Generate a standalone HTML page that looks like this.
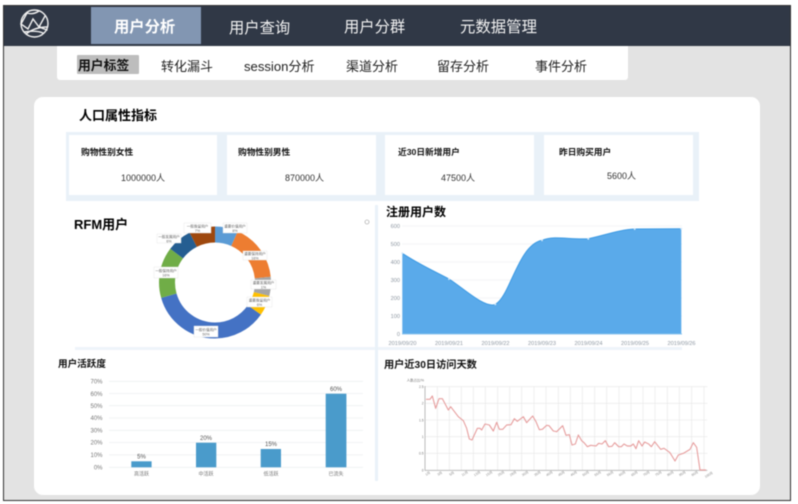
<!DOCTYPE html>
<html lang="zh-CN">
<head>
<meta charset="utf-8">
<title>用户分析</title>
<style>
html,body{margin:0;padding:0;background:#fff;}
body{width:798px;height:504px;overflow:hidden;position:relative;font-family:"Liberation Sans","Noto Sans CJK SC",sans-serif;}
#wrap{position:absolute;left:0;top:0;width:798px;height:504px;filter:blur(.45px);}
#frame{position:absolute;left:3px;top:5px;width:786px;height:494px;background:#e3e3e3;border:1px solid #333;overflow:hidden;}
.abs,.t{position:absolute;}
.t{white-space:nowrap;line-height:1;}
svg{position:absolute;left:0;top:0;}
svg text{font-family:"Liberation Sans","Noto Sans CJK SC",sans-serif;}
</style>
</head>
<body>
<div id="wrap">
<div id="frame"></div>
<div class="abs" style="left:4px;top:6px;width:786px;height:40px;background:#303846;"></div>
<div class="abs" style="left:91px;top:7px;width:110px;height:37px;background:#8296b2;"></div>
<div class="abs" style="left:57px;top:46px;width:571px;height:34px;background:#fff;border-radius:0 0 3px 3px;"></div>
<div class="abs" style="left:77px;top:55px;width:62px;height:19px;background:#bdbdbd;border-radius:1px;"></div>
<div class="abs" style="left:34px;top:97px;width:726px;height:398px;background:#fff;border-radius:9px;"></div>
<div class="abs" style="left:66px;top:132px;width:633px;height:69px;background:#e9f1f8;"></div>
<div class="abs" style="left:69px;top:135px;width:148px;height:60px;background:#fff;"></div>
<div class="abs" style="left:227px;top:135px;width:149px;height:60px;background:#fff;"></div>
<div class="abs" style="left:385px;top:135px;width:149px;height:60px;background:#fff;"></div>
<div class="abs" style="left:544px;top:135px;width:149px;height:60px;background:#fff;"></div>
<div class="abs" style="left:75px;top:347px;width:607px;height:3px;background:#eef4fa;"></div>
<div class="abs" style="left:375px;top:205px;width:3px;height:276px;background:#eaf2f9;"></div>

<span class="t" style="left:114px;top:20px;font-size:15.3px;font-weight:700;color:#fff;">用户分析</span>
<span class="t" style="left:229px;top:21px;font-size:15.3px;color:#f2f2f2;">用户查询</span>
<span class="t" style="left:344px;top:20px;font-size:15.3px;color:#f2f2f2;">用户分群</span>
<span class="t" style="left:460px;top:20px;font-size:15.4px;color:#f2f2f2;">元数据管理</span>

<span class="t" style="left:78px;top:60px;font-size:12.8px;font-weight:700;color:#111;">用户标签</span>
<span class="t" style="left:161px;top:60px;font-size:13px;color:#222;">转化漏斗</span>
<span class="t" style="left:244px;top:60px;font-size:13.1px;color:#222;">session分析</span>
<span class="t" style="left:346px;top:60px;font-size:13px;color:#222;">渠道分析</span>
<span class="t" style="left:437px;top:60px;font-size:13px;color:#222;">留存分析</span>
<span class="t" style="left:535px;top:60px;font-size:13px;color:#222;">事件分析</span>

<span class="t" style="left:79px;top:109px;font-size:13px;font-weight:700;color:#000;">人口属性指标</span>

<span class="t" style="left:81px;top:148px;font-size:8.7px;font-weight:700;color:#111;">购物性别女性</span>
<span class="t" style="left:238px;top:148px;font-size:8.7px;font-weight:700;color:#111;">购物性别男性</span>
<span class="t" style="left:398px;top:148px;font-size:8.7px;font-weight:700;color:#111;">近30日新增用户</span>
<span class="t" style="left:559px;top:148px;font-size:8.7px;font-weight:700;color:#111;">昨日购买用户</span>
<span class="t" style="left:121px;top:174px;font-size:9px;color:#333;">1000000人</span>
<span class="t" style="left:285px;top:174px;font-size:9px;color:#333;">870000人</span>
<span class="t" style="left:441px;top:174px;font-size:9px;color:#333;">47500人</span>
<span class="t" style="left:607px;top:172px;font-size:9px;color:#333;">5600人</span>

<span class="t" style="left:74px;top:218px;font-size:13px;font-weight:700;color:#000;">RFM用户</span>
<span class="t" style="left:386px;top:206px;font-size:12px;font-weight:700;color:#000;">注册用户数</span>
<span class="t" style="left:58px;top:360px;font-size:9.6px;font-weight:700;color:#111;">用户活跃度</span>
<span class="t" style="left:384px;top:361px;font-size:10.2px;font-weight:700;color:#111;">用户近30日访问天数</span>

<svg width="798" height="504" viewBox="0 0 798 504">
  <!-- logo -->
  <g fill="none" stroke="#f0f0f0" stroke-width="1.4" stroke-linecap="round">
    <circle cx="34.500" cy="23.500" r="13.500"/>
    <path d="M27 13 Q33 15 39 11 M27 13 L21 24 L28 29 L33 19 L39 27 L45 16 M26 34 Q35 27 47 27 M24 32 Q36 30 43 33 M39 27 L47 30"/>
  </g>
  <circle cx="39.500" cy="27" r="1.300" fill="#f0f0f0"/>
  <circle cx="367" cy="222" r="2" fill="#fff" stroke="#999" stroke-width=".6"/>

  <!-- donut -->
  <g fill="none" stroke-width="16" transform="rotate(-90 215 282.500)">
    <circle cx="215" cy="282.500" r="48" pathLength="360" stroke="#5b9bd5" stroke-dasharray="24 360" stroke-dashoffset="0"/>
    <circle cx="215" cy="282.500" r="48" pathLength="360" stroke="#ed7d31" stroke-dasharray="60 360" stroke-dashoffset="-24"/>
    <circle cx="215" cy="282.500" r="48" pathLength="360" stroke="#a5a5a5" stroke-dasharray="20 360" stroke-dashoffset="-84"/>
    <circle cx="215" cy="282.500" r="48" pathLength="360" stroke="#ffc000" stroke-dasharray="21 360" stroke-dashoffset="-104"/>
    <circle cx="215" cy="282.500" r="48" pathLength="360" stroke="#4472c4" stroke-dasharray="129 360" stroke-dashoffset="-125"/>
    <circle cx="215" cy="282.500" r="48" pathLength="360" stroke="#70ad47" stroke-dasharray="53 360" stroke-dashoffset="-254"/>
    <circle cx="215" cy="282.500" r="48" pathLength="360" stroke="#255e91" stroke-dasharray="26 360" stroke-dashoffset="-307"/>
    <circle cx="215" cy="282.500" r="48" pathLength="360" stroke="#9e480e" stroke-dasharray="27 360" stroke-dashoffset="-333"/>
  </g>
  <g fill="#fff" stroke="#e4e4e4" stroke-width=".4">
    <rect x="184" y="223" width="27" height="10"/>
    <rect x="157" y="234" width="24" height="9"/>
    <rect x="154" y="267" width="24" height="11"/>
    <rect x="194" y="326" width="24" height="11"/>
    <rect x="223" y="223" width="24" height="10"/>
    <rect x="243" y="251" width="24" height="9"/>
    <rect x="251" y="280" width="25" height="9"/>
    <rect x="247" y="297" width="25" height="10"/>
  </g>
  <g font-size="3.600" fill="#666" text-anchor="middle">
    <text x="197.500" y="227.500">一般挽留用户</text><text x="197.500" y="232">7%</text>
    <text x="169" y="238">一般发展用户</text><text x="169" y="242.500">6%</text>
    <text x="166" y="272">一般保持用户</text><text x="166" y="276.500">16%</text>
    <text x="206" y="331">一般价值用户</text><text x="206" y="335.500">50%</text>
    <text x="235" y="227.500">重要价值用户</text><text x="235" y="232">8%</text>
    <text x="255" y="255">重要保持用户</text><text x="255" y="259.500">16%</text>
    <text x="263.500" y="284">重要发展用户</text><text x="263.500" y="288.500">1%</text>
    <text x="259.500" y="301.500">重要挽留用户</text><text x="259.500" y="306">6%</text>
  </g>

  <!-- area chart -->
  <g stroke="#f0f2f5" stroke-width=".7">
    <path d="M402 226H682M402 244H682M402 262H682M402 280H682M402 298H682M402 316H682"/>
  </g>
  <path d="M402.300 253.300 C420 265 436 272 449 279 C462 287 485 309 495.300 304.300 C510 297 518 245 542 240.300 C555 235 570 240 588.300 238.700 C602 236 620 229.500 634.700 229 L681.300 228.700 V333.700 H402.300 Z" fill="#5aaaea"/>
  <path d="M402.300 253.300 C420 265 436 272 449 279 C462 287 485 309 495.300 304.300 C510 297 518 245 542 240.300 C555 235 570 240 588.300 238.700 C602 236 620 229.500 634.700 229 L681.300 228.700" fill="none" stroke="#3c9ae4" stroke-width="1"/>
  <path d="M402 334H682" stroke="#8cc4ee" stroke-width="1"/>
  <g fill="#cfe6f8">
    <circle cx="402.300" cy="253.300" r="1"/><circle cx="449" cy="279" r="1"/><circle cx="495.300" cy="304.300" r="1"/><circle cx="542" cy="240.300" r="1"/><circle cx="588.300" cy="238.700" r="1"/><circle cx="634.700" cy="229" r="1"/><circle cx="681.300" cy="228.700" r="1"/>
  </g>
  <g font-size="5.600" fill="#8f98a3" text-anchor="end">
    <text x="400" y="228">600</text><text x="400" y="246">500</text><text x="400" y="264">400</text><text x="400" y="282">300</text><text x="400" y="300">200</text><text x="400" y="318">100</text><text x="400" y="336">0</text>
  </g>
  <g font-size="5.600" fill="#8f98a3" text-anchor="middle">
    <text x="402.500" y="345">2019/09/20</text><text x="449" y="345">2019/09/21</text><text x="495.500" y="345">2019/09/22</text><text x="542" y="345">2019/09/23</text><text x="588.500" y="345">2019/09/24</text><text x="635" y="345">2019/09/25</text><text x="681.500" y="345">2019/09/26</text>
  </g>

  <!-- bar chart -->
  <g stroke="#eef0f2" stroke-width=".8">
    <path d="M109 381.300H363M109 393.500H363M109 405.700H363M109 418H363M109 430.300H363M109 442.500H363M109 454.800H363M109 467.300H363"/>
  </g>
  <g fill="#4a9bcb">
    <rect x="131.300" y="461.300" width="20.300" height="6"/>
    <rect x="196" y="442.700" width="20.300" height="24.600"/>
    <rect x="260.700" y="449" width="20.300" height="18.300"/>
    <rect x="325.700" y="393.700" width="20.700" height="73.600"/>
  </g>
  <g font-size="6" fill="#777" text-anchor="end">
    <text x="102.500" y="383.500">70%</text><text x="102.500" y="396">60%</text><text x="102.500" y="408">50%</text><text x="102.500" y="420">40%</text><text x="102.500" y="432.500">30%</text><text x="102.500" y="444.500">20%</text><text x="102.500" y="457">10%</text><text x="102.500" y="469.500">0%</text>
  </g>
  <g font-size="6" fill="#555" text-anchor="middle">
    <text x="141.500" y="458.500">5%</text><text x="206" y="440">20%</text><text x="271" y="446">15%</text><text x="336" y="391">60%</text>
  </g>
  <g font-size="5" fill="#777" text-anchor="middle">
    <text x="141.500" y="475.500">高活跃</text><text x="206" y="475.500">中活跃</text><text x="271" y="475.500">低活跃</text><text x="336" y="475.500">已流失</text>
  </g>

  <!-- line chart -->
  <g transform="translate(380 350) scale(.33333)">
    <g stroke="#e6e6e6" stroke-width="1.800" fill="none">
      <path d="M135 110H982M135 160H982M135 210H982M135 260H982M135 310H982"/>
      <path d="M172 110V360M208 110V360M244 110V360M280 110V360M316 110V360M353 110V360M389 110V360M425 110V360M462 110V360M498 110V360M535 110V360M571 110V360M607 110V360M644 110V360M680 110V360M717 110V360M753 110V360M789 110V360M825 110V360M862 110V360M898 110V360M935 110V360M972 110V360"/>
    </g>
    <path d="M135 108V361H982" fill="none" stroke="#bdbdbd" stroke-width="3"/>
    <path d="M138 148L150 148L157 138L167 175L177 146L187 146L205 180L212 170L235 200L250 212L260 235L268 267L276 270L292 235L300 235L305 240L315 222L328 225L340 243L350 217L358 238L368 238L380 225L393 224L403 206L412 214L430 200L440 218L458 198L468 215L478 239L487 238L500 226L507 227L520 243L530 245L548 227L558 256L568 254L576 285L586 282L595 255L605 272L612 278L622 290L632 286L648 288L656 280L666 282L676 272L686 290L696 289L704 278L716 290L724 290L732 282L742 288L752 288L760 282L768 296L776 272L786 288L794 276L806 282L814 290L824 275L842 298L852 295L862 302L870 308L885 333L895 315L910 310L930 298L940 278L950 292L960 360L978 360" fill="none" stroke="#e7a0a0" stroke-width="3.400" stroke-linejoin="round"/>
    <g font-size="10" fill="#777" text-anchor="end">
      <text x="131" y="114">2.5</text><text x="131" y="164">2</text><text x="131" y="214">1.5</text><text x="131" y="264">1</text><text x="131" y="314">0.5</text><text x="131" y="364">0</text>
      <text x="132" y="94">人数占比/%</text>
    </g>
    <g font-size="10" fill="#888" text-anchor="middle">
      <text transform="rotate(-30 144 372)" x="144" y="374">1月</text><text transform="rotate(-30 180 372)" x="180" y="374">3月</text><text transform="rotate(-30 216 372)" x="216" y="374">5月</text><text transform="rotate(-30 255 372)" x="255" y="374">11月</text><text transform="rotate(-30 292 372)" x="292" y="374">13月</text><text transform="rotate(-30 328 372)" x="328" y="374">15月</text><text transform="rotate(-30 364 372)" x="364" y="374">25月</text><text transform="rotate(-30 400 372)" x="400" y="374">28月</text><text transform="rotate(-30 436 372)" x="436" y="374">30月</text><text transform="rotate(-30 473 372)" x="473" y="374">35月</text><text transform="rotate(-30 509 372)" x="509" y="374">40月</text><text transform="rotate(-30 545 372)" x="545" y="374">45月</text><text transform="rotate(-30 582 372)" x="582" y="374">46月</text><text transform="rotate(-30 618 372)" x="618" y="374">50月</text><text transform="rotate(-30 654 372)" x="654" y="374">55月</text><text transform="rotate(-30 691 372)" x="691" y="374">56月</text><text transform="rotate(-30 727 372)" x="727" y="374">60月</text><text transform="rotate(-30 764 372)" x="764" y="374">65月</text><text transform="rotate(-30 800 372)" x="800" y="374">70月</text><text transform="rotate(-30 836 372)" x="836" y="374">75月</text><text transform="rotate(-30 872 372)" x="872" y="374">80月</text><text transform="rotate(-30 908 372)" x="908" y="374">85月</text><text transform="rotate(-30 945 372)" x="945" y="374">90月</text><text transform="rotate(-30 986 374)" x="986" y="378">100月</text>
    </g>
  </g>
</svg>
</div>
</body>
</html>
